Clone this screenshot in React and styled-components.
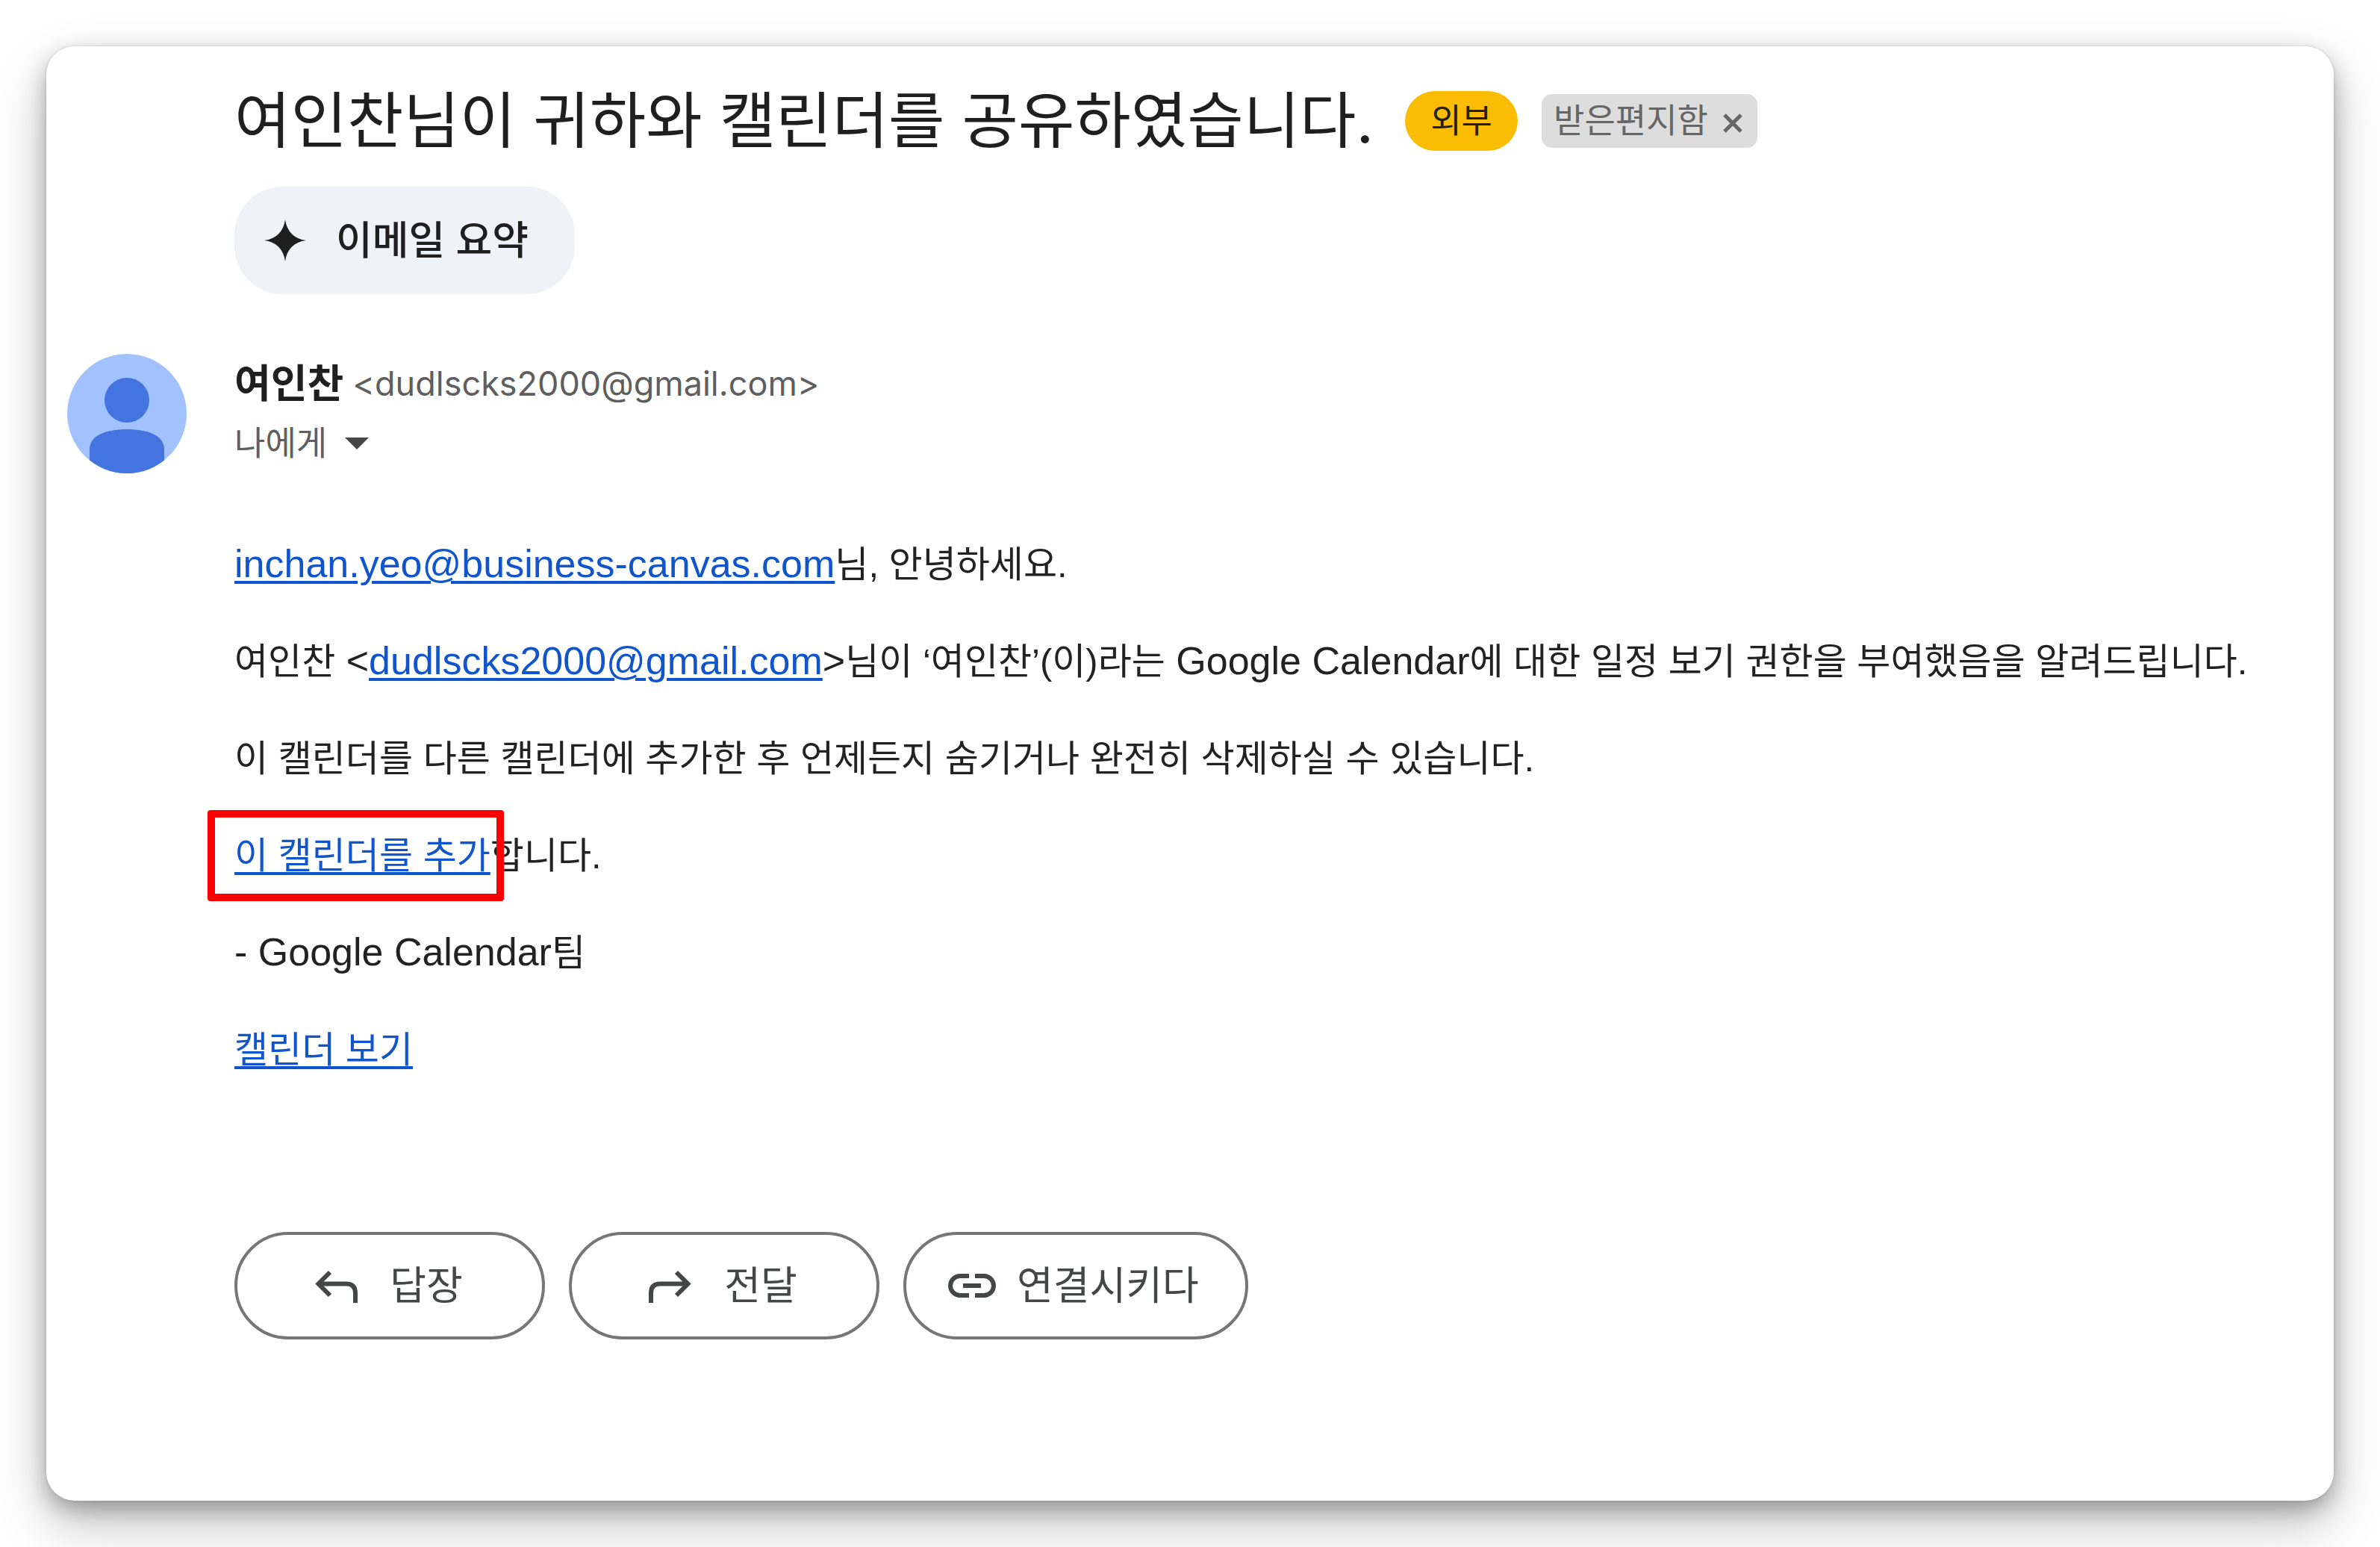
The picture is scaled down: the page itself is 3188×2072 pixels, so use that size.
import React from 'react'
import styled, { createGlobalStyle, css } from 'styled-components'

const palette = {
    text: '#1f1f1f',
    body: '#222222',
    muted: '#5e5e5e',
    button: '#444746',
    outline: '#747775',
    link: '#1155cc',
    chip: '#eff3f8',
    external: '#fbbc04',
    label: '#dddddd',
    mark: '#ff0000',
}

const fonts = {
    ui: `Inter, 'Noto Sans CJK KR', sans-serif`,
    message: `'Liberation Sans', 'Noto Sans CJK KR', sans-serif`,
}

const GlobalStyle = createGlobalStyle`
    *, *::before, *::after {
        box-sizing: border-box;
    }

    body {
        margin: 0;
        background: #ffffff;
        color: ${palette.text};
        font-family: ${fonts.ui};
    }
`

const Page = styled.div`
    display: flex;
    flex-direction: column;
    min-height: 100vh;
    padding: 62px;
    overflow: hidden;
`

const Card = styled.main`
    flex: 1;
    padding: 48px 28px 200px;
    border-radius: 38px;
    background: #ffffff;
    box-shadow: 0 0 4px rgba(0, 0, 0, 0.12), 0 12px 28px rgba(0, 0, 0, 0.26),
        0 30px 70px rgba(0, 0, 0, 0.24);
`

const Indent = styled.div`
    padding-left: 224px;
`

const Header = styled.header`
    display: flex;
    align-items: center;
    min-height: 104px;
`

const Subject = styled.h1`
    margin: 0 42px 0 0;
    font-size: 82px;
    font-weight: 400;
    line-height: 104px;
`

const External = styled.span`
    margin-right: 32px;
    padding: 0 34px;
    border-radius: 40px;
    background: ${palette.external};
    font-size: 45px;
    line-height: 80px;
`

const Label = styled.span`
    display: flex;
    align-items: center;
    gap: 20px;
    padding: 0 20px 0 16px;
    border-radius: 14px;
    background: ${palette.label};
    color: #666666;
    font-size: 45px;
    line-height: 72px;
`

const resetButton = css`
    display: inline-flex;
    align-items: center;
    margin: 0;
    border: 0;
    background: none;
    color: inherit;
    font-family: inherit;
    cursor: pointer;
`

const IconButton = styled.button`
    ${resetButton}
    padding: 0;
`

const Summary = styled.button`
    ${resetButton}
    gap: 40px;
    height: 144px;
    margin-top: 36px;
    padding: 0 62px 0 40px;
    border-radius: 64px;
    background: ${palette.chip};
    font-size: 53px;
    font-weight: 500;
    line-height: 78px;
`

const Sender = styled.section`
    display: flex;
    gap: 64px;
    margin-top: 80px;
`

const Details = styled.div`
    display: flex;
    flex-direction: column;
`

const From = styled.div`
    display: flex;
    align-items: center;
    gap: 12px;
    height: 80px;
`

const Name = styled.span`
    font-size: 53px;
    font-weight: 700;
    line-height: 80px;
`

const Address = styled.span`
    color: ${palette.muted};
    font-size: 45px;
    line-height: 80px;
`

const Recipient = styled.div`
    display: flex;
    align-items: center;
    gap: 24px;
    height: 80px;
    color: ${palette.muted};
    font-size: 45px;
    line-height: 80px;
`

const Message = styled.article`
    margin-top: 82px;
    color: ${palette.body};
    font-family: ${fonts.message};
    font-size: 52px;
    line-height: 78px;
`

const Paragraph = styled.p`
    margin: 0 0 52px;
`

// hangul runs slightly smaller than the latin text beside it
const Ko = styled.span`
    font-size: 49px;
    line-height: 60px;
`

const Link = styled.a`
    color: ${palette.link};
    text-decoration: underline;
    text-decoration-thickness: 4px;
    text-underline-offset: 5px;
`

const Marked = styled.span`
    position: relative;

    &::after {
        content: '';
        position: absolute;
        inset: -34px -18px -34px -36px;
        border: 10px solid ${palette.mark};
        border-radius: 4px;
        pointer-events: none;
    }
`

const Actions = styled.div`
    display: flex;
    gap: 32px;
    margin-top: 206px;
`

const Action = styled.button`
    ${resetButton}
    justify-content: center;
    gap: ${props => (props.$wide ? 28 : 40)}px;
    min-width: 416px;
    height: 144px;
    padding: 0 62px 0 56px;
    border: 4px solid ${palette.outline};
    border-radius: 72px;
    color: ${palette.button};
    font-size: 53px;
    line-height: 78px;
`

const Avatar = () => (
    <svg width="160" height="160" viewBox="0 0 160 160" aria-hidden="true">
        <clipPath id="avatar">
            <circle cx="80" cy="80" r="80" />
        </clipPath>
        <g clipPath="url(#avatar)">
            <rect width="160" height="160" fill="#a1c2fe" />
            <circle cx="80" cy="62" r="30" fill="#4374e0" />
            <path
                d="M30 160V128C30 110 50 101 80 101S130 110 130 128V160Z"
                fill="#4374e0"
            />
        </g>
    </svg>
)

const Spark = () => (
    <svg width="56" height="56" viewBox="0 0 56 56" aria-hidden="true">
        <path
            d="M28 0C30 16 40 26 56 28C40 30 30 40 28 56C26 40 16 30 0 28C16 26 26 16 28 0Z"
            fill="currentColor"
        />
    </svg>
)

const Caret = () => (
    <svg width="32" height="16" viewBox="0 0 32 16" aria-hidden="true">
        <path d="M0 0H32L16 16Z" fill="#444746" />
    </svg>
)

const Cross = () => (
    <svg width="26" height="32" viewBox="0 0 26 32" aria-hidden="true">
        <path
            d="M2 8L24 30M24 8L2 30"
            stroke="currentColor"
            strokeWidth="5"
            fill="none"
        />
    </svg>
)

const Arrow = ({ flip }) => (
    <svg width="64" height="64" viewBox="0 0 64 64" aria-hidden="true">
        <path
            d="M24 14L8.5 29.5L24 45M8.5 29.5H46Q58 29.5 58 42V55"
            transform={flip ? 'translate(64 0) scale(-1 1)' : undefined}
            stroke="currentColor"
            strokeWidth="6"
            fill="none"
        />
    </svg>
)

const Chain = () => (
    <svg width="64" height="64" viewBox="0 0 64 64" aria-hidden="true">
        <path
            d="M28 19H16A13 13 0 0 0 16 45H28M36 19H48A13 13 0 0 1 48 45H36M20 32H44"
            stroke="currentColor"
            strokeWidth="6"
            fill="none"
        />
    </svg>
)

const actions = [
    { text: '답장', icon: <Arrow /> },
    { text: '전달', icon: <Arrow flip /> },
    { text: '연결시키다', icon: <Chain />, wide: true },
]

const App = () => (
    <Page>
        <GlobalStyle />
        <Card>
            <Indent>
                <Header>
                    <Subject>여인찬님이 귀하와 캘린더를 공유하였습니다.</Subject>
                    <External>외부</External>
                    <Label>
                        받은편지함
                        <IconButton type="button" aria-label="라벨 삭제">
                            <Cross />
                        </IconButton>
                    </Label>
                </Header>
                <Summary type="button">
                    <Spark />
                    이메일 요약
                </Summary>
            </Indent>

            <Sender>
                <Avatar />
                <Details>
                    <From>
                        <Name>여인찬</Name>
                        <Address>&lt;dudlscks2000@gmail.com&gt;</Address>
                    </From>
                    <Recipient>
                        나에게
                        <IconButton type="button" aria-label="세부정보 표시">
                            <Caret />
                        </IconButton>
                    </Recipient>
                </Details>
            </Sender>

            <Indent>
                <Message>
                    <Paragraph>
                        <Link href="mailto:inchan.yeo@business-canvas.com">
                            inchan.yeo@business-canvas.com
                        </Link>
                        <Ko>님, 안녕하세요.</Ko>
                    </Paragraph>
                    <Paragraph>
                        <Ko>여인찬</Ko> &lt;
                        <Link href="mailto:dudlscks2000@gmail.com">
                            dudlscks2000@gmail.com
                        </Link>
                        &gt;<Ko>님이 ‘여인찬’(이)라는</Ko> Google Calendar
                        <Ko>에 대한 일정 보기 권한을 부여했음을 알려드립니다.</Ko>
                    </Paragraph>
                    <Paragraph>
                        <Ko>
                            이 캘린더를 다른 캘린더에 추가한 후 언제든지 숨기거나
                            완전히 삭제하실 수 있습니다.
                        </Ko>
                    </Paragraph>
                    <Paragraph>
                        <Ko>
                            <Marked>
                                <Link href="#add">이 캘린더를 추가</Link>
                            </Marked>
                            합니다.
                        </Ko>
                    </Paragraph>
                    <Paragraph>
                        - Google Calendar<Ko>팀</Ko>
                    </Paragraph>
                    <Paragraph>
                        <Ko>
                            <Link href="#calendar">캘린더 보기</Link>
                        </Ko>
                    </Paragraph>
                </Message>

                <Actions>
                    {actions.map(action => (
                        <Action
                            key={action.text}
                            type="button"
                            $wide={action.wide}
                        >
                            {action.icon}
                            {action.text}
                        </Action>
                    ))}
                </Actions>
            </Indent>
        </Card>
    </Page>
)

export default App
